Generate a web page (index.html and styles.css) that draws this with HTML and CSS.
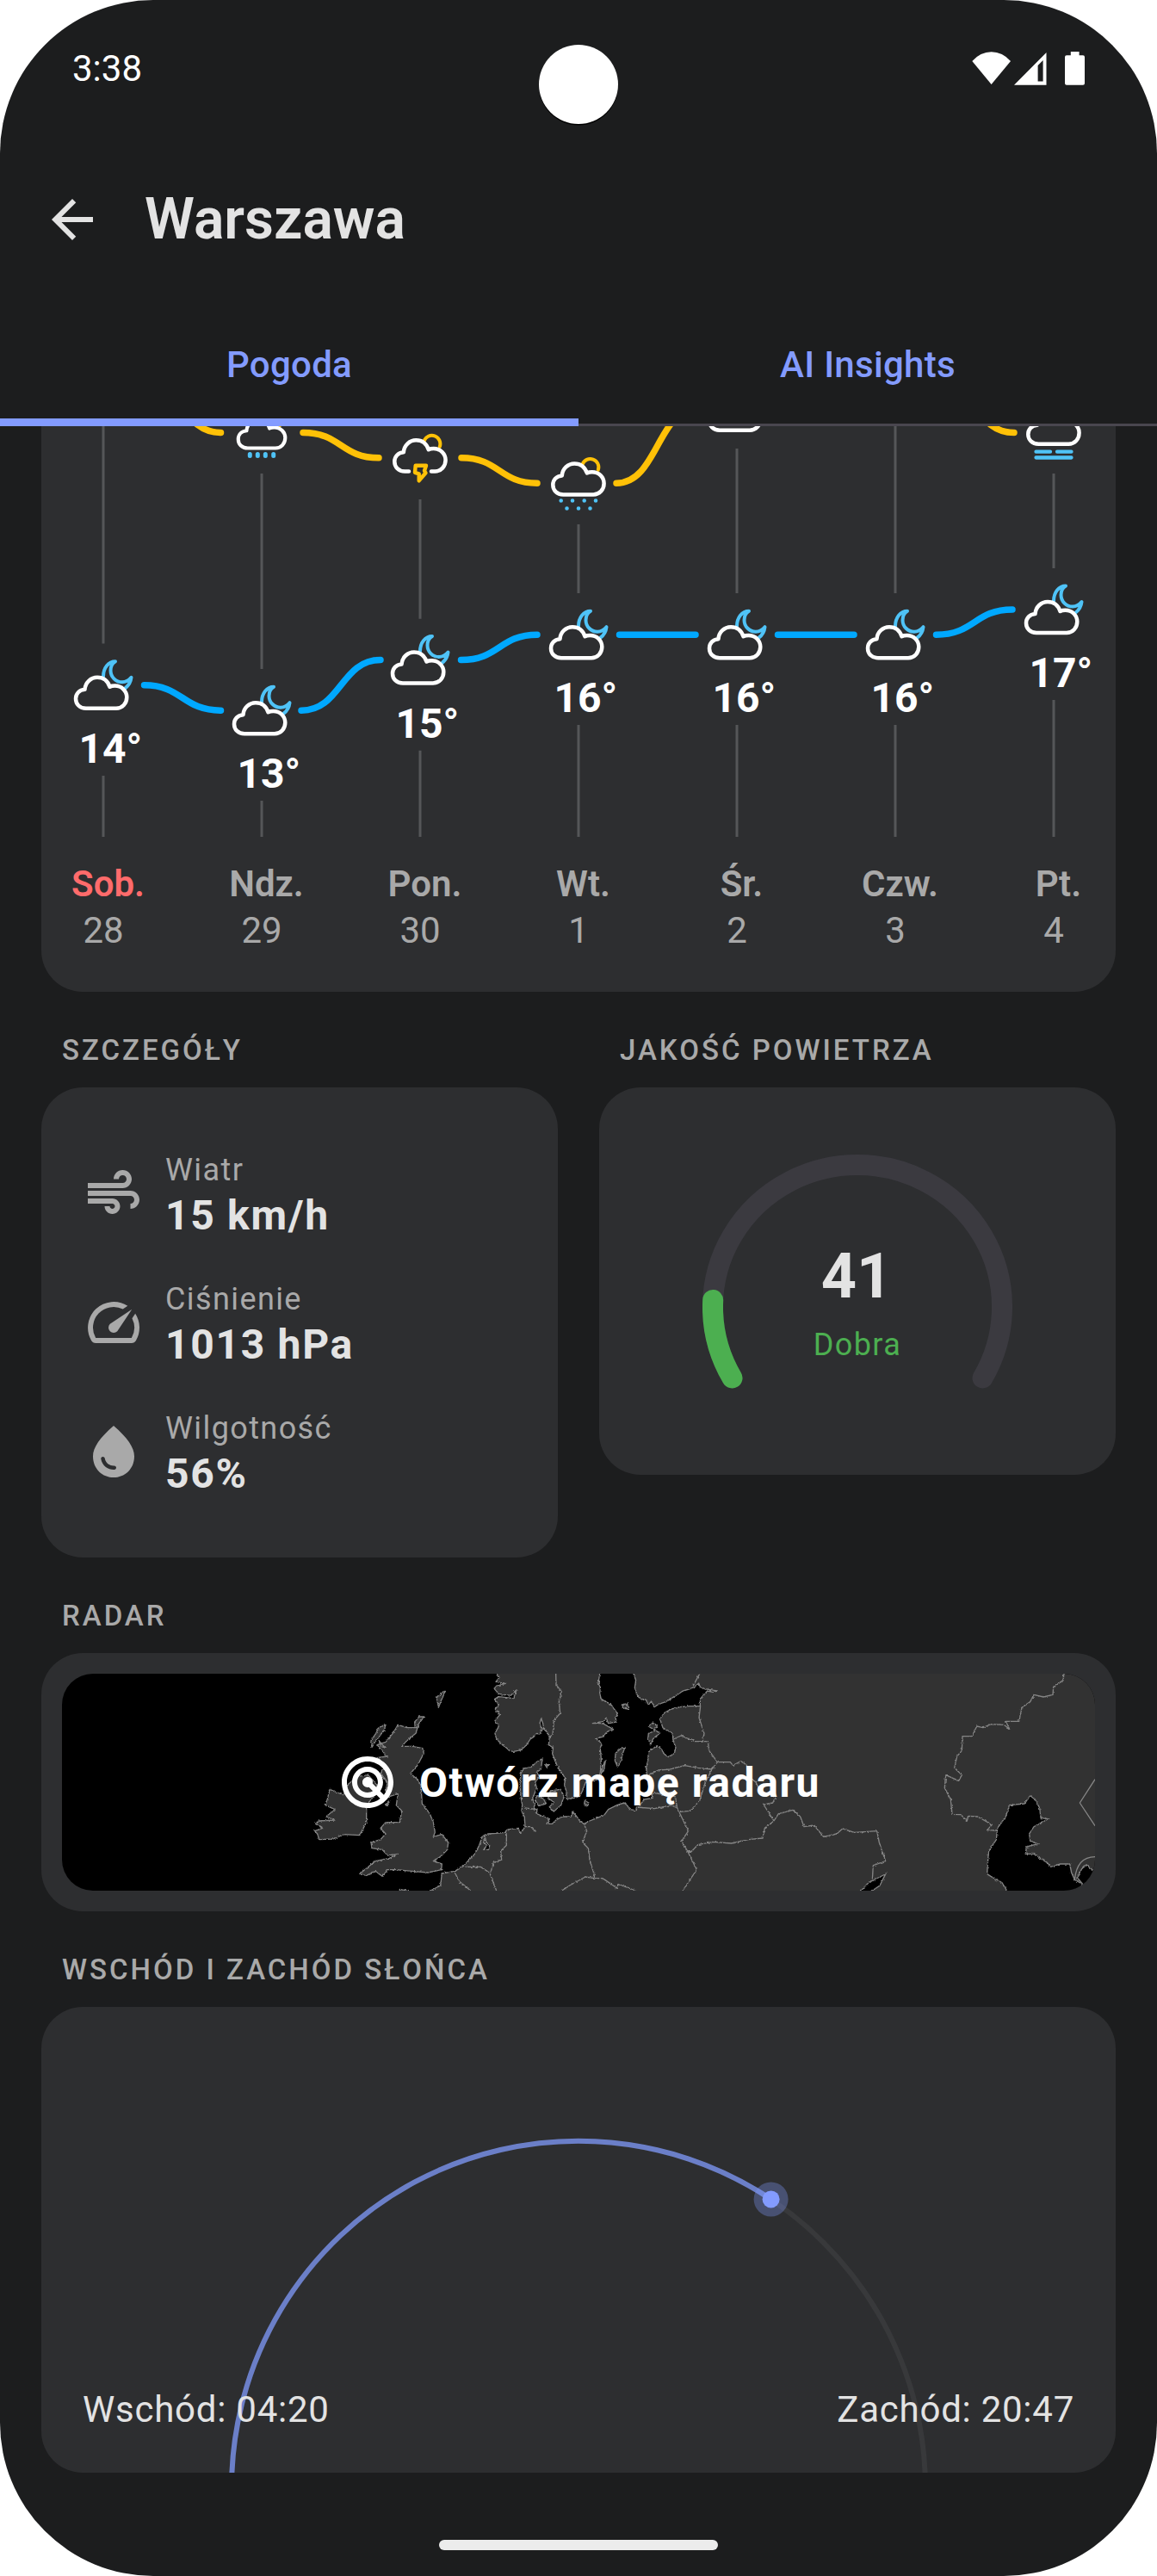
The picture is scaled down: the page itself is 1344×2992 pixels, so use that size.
FILE: index.html
```html
<!DOCTYPE html>
<html lang="pl">
<head>
<meta charset="utf-8">
<title>Warszawa – pogoda</title>
<link rel="stylesheet" href="styles.css">
</head>
<body>
<div class="screen">
  <header class="status-bar">
    <span class="clock">3:38</span>
    <svg class="status-icons" viewBox="1129 59 132 39" aria-hidden="true">
      <path d="M1151.600 97 L1129.300 70 Q1139 59.300 1151.600 59.300 Q1164.300 59.300 1174 70 Z"/>
      <path fill-rule="evenodd" d="M1178 97.700 L1215.500 60 V97.700 Z M1211.600 69 L1205.600 75 V93.500 H1211.600 Z"/>
      <path d="M1243.800 59 H1253.600 V63.300 H1258 Q1260 63.300 1260 65.300 V95.700 Q1260 97.700 1258 97.700 H1239 Q1237 97.700 1237 95.700 V65.300 Q1237 63.300 1239 63.300 H1243.800 Z"/>
    </svg>
    <i class="camera"></i>
  </header>

  <div class="app-bar">
    <svg class="icon back" viewBox="0 0 24 24"><path d="M20 11H7.830l5.590-5.590L12 4l-8 8 8 8 1.410-1.410L7.830 13H20v-2z"/></svg>
    <h1 class="title">Warszawa</h1>
  </div>

  <nav class="tabs">
    <a class="tab tab-active">Pogoda</a>
    <a class="tab">AI Insights</a>
  </nav>

  <main class="content">
    <section class="card chart-card">
      <svg class="chart" viewBox="48 495 1248 477">
        <defs>
          <path id="cloud" d="M-20 27 C-27.500 27 -32 22 -32 15.700 C-32 10 -28 5.500 -21.500 5 C-21 -3 -14.500 -9 -7 -9 C-.5 -9 5 -5.500 7.500 2 C9 1.200 11 .8 13.500 .8 C21.500 .8 27.300 7 27.300 14 C27.300 21.300 22 27 15 27 Z"/>
          <path id="sun" d="M2.300 -8 A9.300 9.300 0 1 1 20.500 -1.500"/>
          <g id="night">
            <path class="moon" d="M0 -10 C0 -20 6 -27.500 14 -27.500 C11.500 -26 8.500 -22.500 8.500 -17 C8.500 -9.500 14.500 -3.500 22 -3.500 C26.500 -3.500 30 -6 32.500 -9 C32 -4.500 30 0 25.500 3.500"/>
            <use href="#cloud" class="cloud"/>
          </g>
        </defs>
        <g class="grid-lines">
          <path d="M120 440V747.500M120 901V972M304 550V777M304 930V972M488 580V718.700M488 871.700V972M672 609V689M672 842V972M856 521V689M856 842V972M1040 440V689M1040 842V972M1224 550V660M1224 813V972"/>
        </g>
        <g class="high">
          <path d="M166 443.800C211 443.800 211 502.500 256.500 502.500M352 502.500C396 502.500 396 531.800 440 531.800M536 531.800C580 531.800 580 561.200 624 561.200M716 561.200C764 561.200 764 473.300 812 473.300M1087 443.800C1132 443.800 1132 502.500 1178 502.500"/>
        </g>
        <g class="low">
          <path d="M167.500 795.800C212 795.800 212 825.200 256.500 825.200M350 825.200C396 825.200 396 766.500 442 766.500M535.500 766.500C580 766.500 580 737.200 624 737.200M719.500 737.200H808M903.500 737.200H992M1087.500 737.200C1132 737.200 1132 708 1176 708"/>
        </g>

        <g transform="translate(304 502.500)">
          <g transform="translate(2.200 -6.800) scale(.92)"><use href="#sun" class="sun"/><use href="#cloud" class="cloud"/></g>
          <path class="drops" d="M-13.700 25V27M-4.700 25V27M4.300 25V27M13.700 25V27"/>
        </g>
        <g transform="translate(488 531.800)">
          <use href="#sun" class="sun" x="2.300" y="-11.500"/>
          <path class="cloud" d="M-13 15.700 H-17.700 C-25.200 15.700 -29.700 10.500 -29.700 4.200 C-29.700 -1.500 -25.700 -6 -19.200 -6.500 C-18.700 -14.500 -12.200 -20.500 -4.700 -20.500 C1.800 -20.500 7.300 -17 9.800 -9.500 C11.300 -10.300 13.300 -10.700 15.800 -10.700 C23.800 -10.700 29.600 -4.500 29.600 2.500 C29.600 9.800 24.300 15.700 17.300 15.700 H13"/>
          <path class="bolt" d="M-5.300 9H7L5 15L6.500 17.500L-1.300 26.500L-1.300 18.500L-6 17Z"/>
        </g>
        <g transform="translate(672 561.200)">
          <use href="#sun" class="sun" x="2.300" y="-13.800"/><use href="#cloud" class="cloud" x="2.300" y="-13.800"/>
          <path class="drizzle" d="M-20.300 20.300h.01M-7 20.300h.01M6.700 20.300h.01M20 20.300h.01M-13.500 29.300h.01M0 29.300h.01M13.500 29.300h.01"/>
        </g>
        <use href="#cloud" class="cloud" x="856" y="472.700"/>
        <g transform="translate(1224 502.500)">
          <use href="#cloud" class="cloud" x="2.300" y="-13.800"/>
          <path class="fog" d="M-20.500 22.200H-4M4 22.200H20.500M-20.500 29H20.500"/>
        </g>

        <use href="#night" x="120" y="795.800"/>
        <use href="#night" x="304" y="825.200"/>
        <use href="#night" x="488" y="766.500"/>
        <use href="#night" x="672" y="737.200"/>
        <use href="#night" x="856" y="737.200"/>
        <use href="#night" x="1040" y="737.200"/>
        <use href="#night" x="1224" y="708"/>

        <g class="temps">
          <text x="91.500" y="886">14°</text>
          <text x="275.500" y="915">13°</text>
          <text x="459.500" y="857">15°</text>
          <text x="643.500" y="827.300">16°</text>
          <text x="827.500" y="827.300">16°</text>
          <text x="1011.500" y="827.300">16°</text>
          <text x="1195.500" y="798">17°</text>
        </g>
      </svg>
      <div class="days">
        <div class="day day-today"><b>Sob.</b><span>28</span></div>
        <div class="day"><b>Ndz.</b><span>29</span></div>
        <div class="day"><b>Pon.</b><span>30</span></div>
        <div class="day"><b>Wt.</b><span>1</span></div>
        <div class="day"><b>Śr.</b><span>2</span></div>
        <div class="day"><b>Czw.</b><span>3</span></div>
        <div class="day"><b>Pt.</b><span>4</span></div>
      </div>
    </section>

    <div class="columns">
      <section>
        <h2 class="label">SZCZEGÓŁY</h2>
        <div class="card details">
          <div class="detail">
            <svg class="icon" viewBox="0 0 24 24"><path d="M14.500 17c0 1.650-1.350 3-3 3s-3-1.350-3-3h2c0 .55.45 1 1 1s1-.45 1-1-.45-1-1-1H2v-2h9.500c1.650 0 3 1.350 3 3zM19 6.500C19 4.570 17.430 3 15.500 3S12 4.570 12 6.500h2c0-.83.67-1.500 1.500-1.500s1.500.67 1.500 1.500S16.330 8 15.500 8H2v2h13.500c1.930 0 3.500-1.570 3.500-3.500zm-.5 4.500H2v2h16.500c.83 0 1.500.67 1.500 1.500s-.67 1.500-1.500 1.500v2c1.930 0 3.500-1.570 3.500-3.500S20.430 11 18.500 11z"/></svg>
            <div class="reading"><p class="name">Wiatr</p><p class="value">15 km/h</p></div>
          </div>
          <div class="detail">
            <svg class="icon" viewBox="0 0 24 24"><path d="M20.380 8.570l-1.230 1.850a8 8 0 0 1-.22 7.580H5.070A8 8 0 0 1 15.580 6.850l1.850-1.230A10 10 0 0 0 3.350 19a2 2 0 0 0 1.720 1h13.850a2 2 0 0 0 1.740-1 10 10 0 0 0-.27-10.440zm-9.790 6.840a2 2 0 0 0 2.830 0l5.660-8.490-8.490 5.660a2 2 0 0 0 0 2.830z"/></svg>
            <div class="reading"><p class="name">Ciśnienie</p><p class="value">1013 hPa</p></div>
          </div>
          <div class="detail">
            <svg class="icon" viewBox="0 0 24 24"><path d="M12 2c-5.330 4.550-8 8.480-8 11.800 0 4.980 3.800 8.200 8 8.200s8-3.220 8-8.200c0-3.320-2.670-7.250-8-11.800zM7.830 14c.37 0 .67.26.74.62.41 2.220 2.280 2.980 3.640 2.870.43-.02.79.32.79.75 0 .4-.32.73-.72.75-2.130.13-4.620-1.090-5.190-4.120-.08-.45.28-.87.74-.87z"/></svg>
            <div class="reading"><p class="name">Wilgotność</p><p class="value">56%</p></div>
          </div>
        </div>
      </section>
      <section>
        <h2 class="label">JAKOŚĆ POWIETRZA</h2>
        <div class="card air">
          <svg class="gauge" viewBox="-180 -180 360 360">
            <path class="gauge-track" d="M-145.500 82.500A168 165 0 1 1 145.500 82.500"/>
            <path class="gauge-value" d="M-145.500 82.500A168 165 0 0 1 -167.800 -8"/>
          </svg>
          <div class="air-text"><strong>41</strong><span>Dobra</span></div>
        </div>
      </section>
    </div>

    <section>
      <h2 class="label">RADAR</h2>
      <div class="card radar">
        <div class="map-box">
          <svg class="map" viewBox="-1224 42 3600 756" preserveAspectRatio="none">
            <filter id="rough" x="-5%" y="-5%" width="110%" height="110%">
              <feTurbulence type="fractalNoise" baseFrequency="0.13" numOctaves="2" seed="4" result="n"/>
              <feDisplacementMap in="SourceGraphic" in2="n" scale="9" xChannelSelector="R" yChannelSelector="G"/>
            </filter>
            <g class="land" filter="url(#rough)">
              <path d="M290 20L290 42 300 55 288 70 322 76 288 85 283 95 298 112 340 118 360 98 350 128 298 122 284 130 298 150 286 165 302 185 285 205 298 225 285 250 290 268 305 285 322 298 335 310 350 313 375 308 395 290 408 270 420 262 430 250 442 252 448 235 441 215 446 198 452 215 455 235 466 245 475 262 472 290 488 300 485 320 494 345 505 370 520 390 530 408 527 430 533 450 535 478 560 475 580 470 590 450 600 422 630 415 648 405 652 385 655 340 652 300 658 285 635 268 660 262 675 245 696 235 660 215 625 215 665 208 672 195 680 215 708 210 705 195 712 180 700 165 690 150 672 140 655 130 650 110 652 90 645 75 650 42 650 20Z"/>
              <path d="M768 20L768 42 776 65 772 90 780 115 790 130 810 132 820 150 830 138 840 158 855 148 880 140 900 128 920 115 940 102 965 95 980 88 995 75 1000 88 1015 95 1035 98 1060 102 1045 106 1025 102 1010 118 1000 130 1000 155 960 155 930 158 900 165 875 178 860 200 870 230 885 240 903 248 905 270 915 300 910 320 890 332 875 322 865 305 850 293 835 303 820 315 818 345 812 370 815 400 820 430 830 460 835 475 805 480 790 500 775 518 755 515 745 500 735 492 710 500 680 515 665 535 640 545 615 555 595 565 580 555 570 540 555 522 550 540 520 540 500 550 485 565 465 565 475 548 455 540 430 530 432 515 420 510 425 495 415 480 430 440 425 420 440 400 430 385 445 375 450 338 430 350 410 368 385 372 375 390 372 430 375 470 380 500 378 520 388 545 390 575 375 598 365 580 330 585 320 595 290 598 260 600 240 612 230 640 215 670 195 690 175 712 145 730 100 738 95 780 60 798 60 830 2400 830 2400 20Z"/>
              <path d="M430 468 455 478 462 495 440 502 425 485ZM478 450 515 445 525 470 515 500 490 522 473 508 490 490 470 475ZM738 298 730 320 724 345 712 366 703 345 705 320 720 305ZM730 150 745 146 750 165 730 162ZM820 250 845 240 860 248 835 270 828 288 818 268ZM820 225 835 213 850 225 840 238ZM598 485 612 492 608 502 596 495ZM460 360 472 358 465 368ZM670 345 665 375 655 392 660 365ZM80 125 92 118 105 104 112 103 100 130 88 160 85 140ZM5 210 14 200 20 192 38 192 20 215 8 245Z"/>
              <path d="M-53 220 -22 230 15 230 9 250 -22 275 -40 295 -4 295 33 302 37 320 15 360 -10 390 15 410 27 430 31 495 58 530 70 560 76 595 70 610 100 602 122 630 119 655 94 680 70 695 100 705 98 725 51 735 -4 730 -59 725 -89 725 -108 748 -132 730 -163 745 -187 740 -163 720 -132 695 -83 685 -53 670 -89 675 -108 655 -144 650 -147 630 -114 620 -96 600 -114 580 -96 560 -47 560 -40 520 -59 500 -53 460 -83 470 -96 450 -89 420 -114 390 -96 360 -126 335 -92 330 -108 310 -126 290 -96 280 -71 250Z"/>
              <path d="M-291 445 -242 465 -230 430 -193 400 -157 395 -126 430 -138 470 -163 500 -163 560 -187 605 -242 602 -279 618 -328 620 -334 600 -343 590 -316 580 -340 565 -330 555 -273 552 -304 540 -273 515 -306 500 -298 475Z"/>
              <path d="M-120 230 -96 220 -102 240 -126 270 -144 298 -147 275 -130 250ZM-120 275 -98 300 -112 295ZM-96 500 -86 486 -84 492 -92 502ZM-47 793 -16 800 -47 810Z"/>
            </g>
            <g class="sea" filter="url(#rough)">
              <path d="M2069 798 2052 770 2013 748 2000 740 2003 690 2006 660 2032 620 2036 580 2065 540 2078 500 2130 495 2150 467 2167 480 2183 510 2187 545 2213 548 2163 575 2147 600 2150 625 2176 635 2137 645 2134 670 2163 670 2209 700 2222 715 2255 705 2288 705 2294 735 2305 760 2333 775 2320 800 2320 830 2069 830Z"/>
              <path d="M2333 775 2314 752 2330 722 2346 708 2372 730 2400 770 2360 830 2320 798ZM1555 810 1561 798 1587 770 1646 740 1626 780 1600 798 1595 810ZM250 610 245 630 257 640 246 655 264 655 266 640 255 630Z"/>
            </g>
            <g class="borders" filter="url(#rough)">
              <path d="M497 42 498 80 517 105 508 140 512 180 490 205 486 255 475 262M998 42 975 85M1001 155 996 195 1014 250 1009 273M907 270 933 258 982 278 1027 278 1031 310 1060 350 1041 375 992 370 946 362 893 375 854 378 821 395M1060 350 1105 350 1114 362 1142 347 1162 360 1168 400 1194 420 1208 450 1263 470 1253 492 1221 498 1257 555 1225 580 1218 615 1168 620 1109 633 1044 628 992 638 969 662 952 662M1041 375 1018 420 998 485 965 520 930 523M776 507 841 512 900 500 920 510 959 590 935 625 956 660 988 725 939 798M808 470 841 458 913 470 920 510"/>
              <path d="M1257 555 1273 530 1323 517 1349 540 1362 575 1397 570 1430 610 1476 600 1496 582 1537 595 1616 590 1624 630 1646 695 1603 710 1600 760M595 565 605 590 590 630 610 650 615 690 630 740 632 755M518 798 545 780 600 750 632 755 660 755 690 775 710 790 715 775 775 798M325 598 325 640 305 660 308 690 280 700 268 740 290 798M145 735 160 765 200 798M180 715 235 715 265 735M388 510 432 515M390 575 410 575 425 592"/>
              <path d="M2268 42 2265 65 2231 88 2229 115 2196 123 2163 115 2150 140 2121 160 2111 208 2065 208 2078 235 2058 220 2013 218 1986 230 1964 225 1947 260 1914 260 1912 310 1895 330 1886 370 1912 395 1901 415 1856 395 1852 440 1873 480 1878 532 1908 533 1930 555 1934 538 1967 540 2017 568 2000 587 2036 588"/>
            </g>
            <path class="borders" d="M2376 410 2323 492 2376 572M2305 760 C2310 710 2330 680 2376 680"/>
          </svg>
          <div class="map-action">
            <svg class="icon" viewBox="0 0 24 24"><path d="M19.740 18.330C21.150 16.600 22 14.400 22 12c0-5.520-4.480-10-10-10S2 6.480 2 12s4.480 10 10 10c2.400 0 4.600-.85 6.330-2.260.27-.22.53-.46.78-.71.03-.03.05-.06.07-.08.2-.2.39-.41.56-.62zM12 20c-4.410 0-8-3.590-8-8s3.590-8 8-8 8 3.590 8 8c0 1.850-.63 3.540-1.690 4.900l-1.430-1.430c.69-.98 1.100-2.170 1.100-3.460 0-3.310-2.690-6-6-6s-6 2.690-6 6 2.690 6 6 6c1.300 0 2.510-.42 3.490-1.130l1.420 1.420C15.540 19.370 13.850 20 12 20zm1.920-7.490c.17-.66.02-1.380-.49-1.900l-.02-.02c-.77-.77-2-.78-2.780-.04-.01.01-.03.02-.05.04-.78.78-.78 2.050 0 2.830l.02.02c.52.51 1.250.67 1.910.49l1.510 1.510c-.6.36-1.290.58-2.040.58-2.210 0-4-1.790-4-4s1.790-4 4-4 4 1.790 4 4c0 .73-.21 1.410-.56 2l-1.500-1.510z"/></svg>
            <span>Otwórz mapę radaru</span>
          </div>
        </div>
      </div>
    </section>

    <section>
      <h2 class="label">WSCHÓD I ZACHÓD SŁOŃCA</h2>
      <div class="card sun-card">
        <svg class="sun-arc" viewBox="48 2331 1248 541">
          <path class="arc-track" d="M269 2890A403 403 0 0 1 1075 2890"/>
          <path class="arc-done" d="M269 2890A403 403 0 0 1 895.600 2554.400"/>
          <circle class="halo" cx="895.600" cy="2554.400" r="20"/>
          <circle class="dot" cx="895.600" cy="2554.400" r="10"/>
        </svg>
        <div class="sun-times"><span>Wschód: 04:20</span><span>Zachód: 20:47</span></div>
      </div>
    </section>
  </main>
  <footer class="nav"><i class="handle"></i></footer>
</div>
</body>
</html>
```
FILE: styles.css
```css
* { box-sizing: border-box; margin: 0; padding: 0; }
body { background: #fff; font-family: Roboto, sans-serif; }
.screen {
  width: 1344px; height: 2992px; overflow: hidden;
  display: flex; flex-direction: column;
  background: #1c1d1e; border-radius: 178px; color: #e3e3e3;
}
.icon { width: 72px; height: 72px; fill: currentColor; flex: none; display: block; }

.status-bar {
  position: relative; height: 159px; padding: 0 83px 0 84px; flex: none;
  display: flex; justify-content: space-between; align-items: center; color: #fff;
}
.clock { font-size: 42px; line-height: 50px; }
.status-icons { width: 132px; height: 39px; fill: #fff; }
.camera {
  position: absolute; left: 626px; top: 52px; width: 92px; height: 92px;
  border-radius: 50%; background: #fff; box-shadow: 0 1.500px 0 #000;
}

.app-bar { height: 192px; padding-left: 48px; display: flex; align-items: center; gap: 48px; flex: none; }
.title { font-size: 66px; font-weight: 600; line-height: 84px; }

.tabs { height: 144px; display: grid; grid-template-columns: 1fr 1fr; flex: none; box-shadow: inset 0 -3px #49464f; }
.tab {
  display: flex; align-items: center; justify-content: center;
  font-size: 42px; font-weight: 500; letter-spacing: .3px; color: #839bff;
}
.tab-active { box-shadow: inset 0 -9px #839bff; }

.content { padding: 0 48px; flex: none; }
.card { background: #2d2e30; border-radius: 48px; }
.label {
  padding: 48px 24px 24px; font-size: 33px; line-height: 39px;
  font-weight: 500; letter-spacing: 3px; color: #a9a9a9; white-space: nowrap;
}

.chart-card { height: 657px; border-radius: 0 0 48px 48px; }
.chart { display: block; width: 1248px; height: 477px; }
.grid-lines { fill: none; stroke: #555658; stroke-width: 3; }
.high, .low { fill: none; stroke-width: 7.500; stroke-linecap: round; }
.high { stroke: #ffc107; }
.low { stroke: #00a8ff; }
.cloud, .sun, .moon, .bolt, .drops, .drizzle, .fog { fill: none; stroke-linecap: round; stroke-linejoin: round; }
.cloud { stroke: #fff; stroke-width: 4.500; }
.sun { stroke: #ffc107; stroke-width: 4; }
.moon { stroke: #4fc3f7; stroke-width: 4; }
.bolt { stroke: #ffc107; stroke-width: 4.400; }
.drops { stroke: #4fc3f7; stroke-width: 5; }
.drizzle { stroke: #4fc3f7; stroke-width: 4.600; }
.fog { stroke: #4fc3f7; stroke-width: 4.300; }
.temps { fill: #fff; font-size: 48px; font-weight: 700; }
.days { display: grid; grid-template-columns: repeat(7, 184px); margin: 0 -20px; padding-top: 28px; }
.day { display: flex; flex-direction: column; align-items: center; font-size: 42px; line-height: 54px; color: #a9a9a9; }
.day b { font-weight: 600; padding-left: 11px; }
.day-today b { color: #ff6b6b; }

.columns { display: grid; grid-template-columns: 1fr 1fr; gap: 48px; }
.details { padding: 48px; }
.detail { height: 150px; display: flex; align-items: center; gap: 24px; color: #a9a9a9; }
.reading { padding-top: 3px; }
.name { font-size: 36px; line-height: 48px; letter-spacing: 1.400px; }
.value { font-size: 48px; line-height: 58px; font-weight: 700; letter-spacing: 1.700px; color: #e3e3e3; }

.air { display: grid; place-items: center; height: 450px; padding: 60px 0 15px; }
.gauge, .air-text { grid-area: 1 / 1; }
.gauge { width: 360px; height: 360px; fill: none; stroke-width: 24px; stroke-linecap: round; margin-top: 15px; }
.gauge-track { stroke: #3b3a40; }
.gauge-value { stroke: #4caf50; }
.air-text { display: flex; flex-direction: column; align-items: center; padding-top: 16px; }
.air-text strong { font-size: 72px; line-height: 86px; padding-right: 2px; }
.air-text span { font-size: 36px; line-height: 72px; letter-spacing: 1.400px; color: #4caf50; }

.radar { padding: 24px; }
.map-box { display: grid; height: 252px; border-radius: 36px; overflow: hidden; background: #000; }
.map, .map-action { grid-area: 1 / 1; }
.map { width: 1200px; height: 252px; display: block; }
.land { fill: #303030; stroke: #858585; stroke-width: 4; stroke-linejoin: round; }
.sea { fill: #000; stroke: #858585; stroke-width: 4; }
.borders { fill: none; stroke: #858585; stroke-width: 4; stroke-linejoin: round; }
.map-action {
  z-index: 1; display: flex; align-items: center; justify-content: center; gap: 24px;
  font-size: 48px; font-weight: 700; letter-spacing: 1.600px; color: #fff;
}

.sun-card { height: 541px; display: grid; overflow: hidden; }
.sun-arc, .sun-times { grid-area: 1 / 1; }
.sun-arc { width: 1248px; height: 541px; fill: none; stroke-width: 6px; }
.arc-track { stroke: #38393b; }
.arc-done { stroke: #6b7fc8; }
.halo { fill: #839bff; fill-opacity: .32; }
.dot { fill: #839bff; }
.sun-times {
  z-index: 1; align-self: end; display: flex; justify-content: space-between;
  padding: 0 48px 43px; font-size: 42px; line-height: 60px; letter-spacing: .75px;
}

.nav { flex: 1; display: flex; justify-content: center; align-items: flex-end; padding-bottom: 30px; }
.handle { width: 324px; height: 12px; border-radius: 6px; background: #ececec; }
```
